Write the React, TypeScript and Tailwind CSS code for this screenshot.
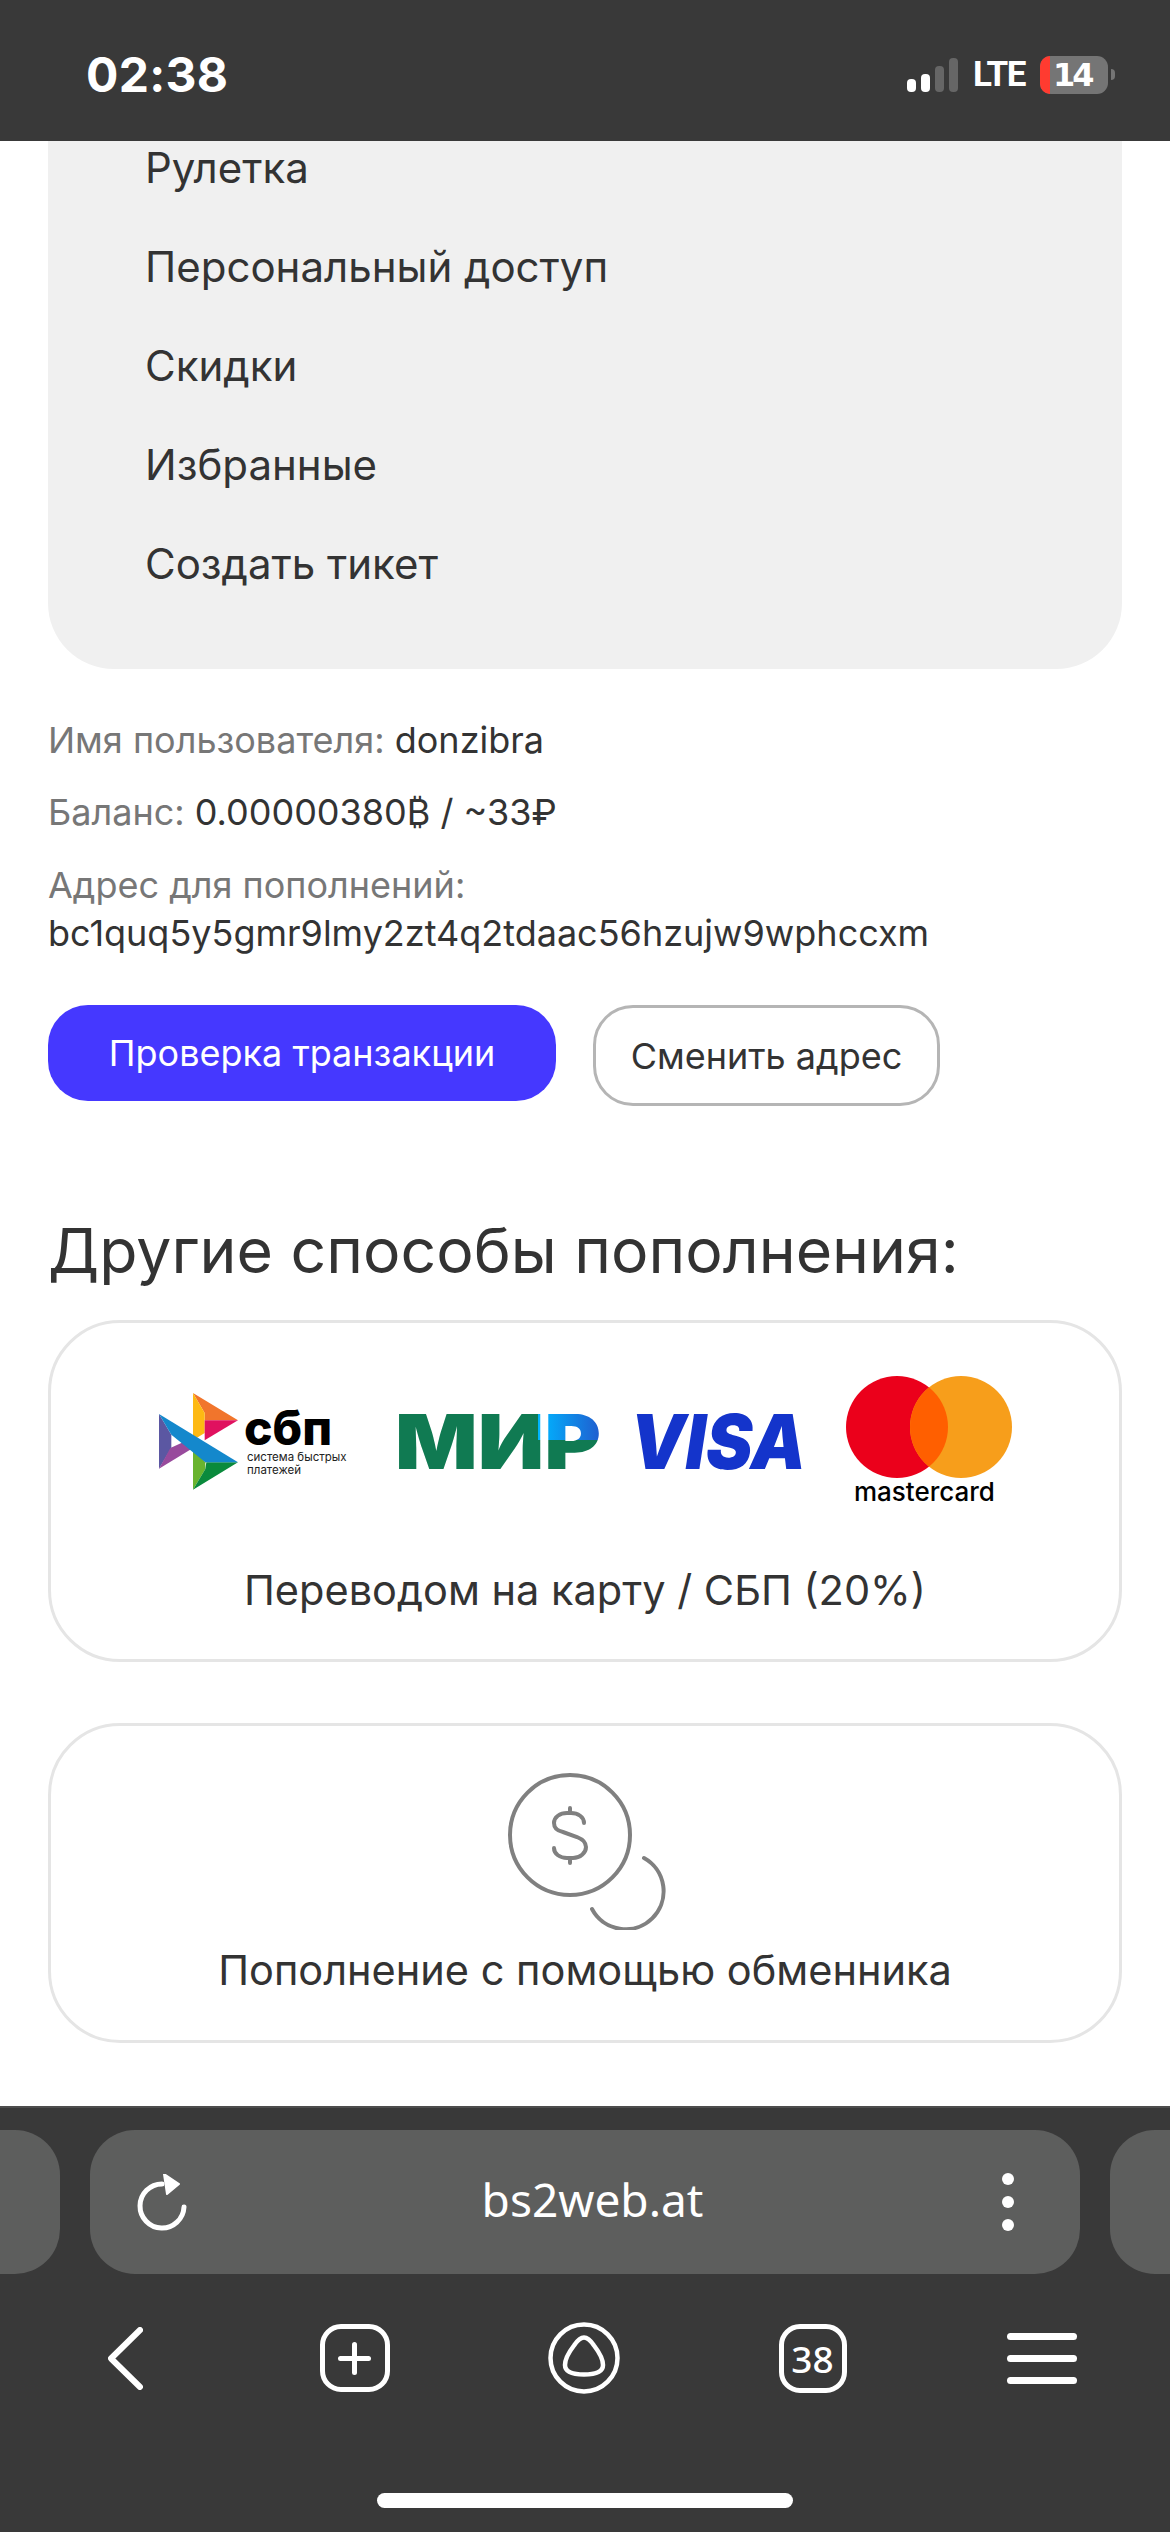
const menuItems = ['Рулетка', 'Персональный доступ', 'Скидки', 'Избранные', 'Создать тикет'];

function SbpLogo() {
  return (
    <svg width="191" height="97" viewBox="0 0 191 97" className="shrink-0 overflow-visible">
      <g transform="translate(-19.33 -23.33) scale(0.3333)">
        <polygon points="160,70 295,152 195,152 195,130" fill="#f1752c" />
        <polygon points="160,70 195,130 195,190 160,212" fill="#fdb913" />
        <polygon points="195,152 295,152 195,212" fill="#e0115f" />
        <polygon points="58,133 95,195 95,235 58,297" fill="#5b57a2" />
        <polygon points="58,297 92,235 130,218 160,235" fill="#984a9c" />
        <polygon points="160,235 197,278 197,298 160,360" fill="#69b42e" />
        <polygon points="160,360 197,298 200,278 295,278" fill="#0a8a3c" />
        <polygon points="58,133 295,278 197,278 95,195" fill="#1488cc" />
      </g>
      <text x="85" y="52" fontFamily="Inter, sans-serif" fontSize="48" fontWeight="800" fill="#000">сбп</text>
      <text x="88" y="68" fontFamily="Inter, sans-serif" fontSize="11.5" fill="#222">система быстрых</text>
      <text x="88" y="81" fontFamily="Inter, sans-serif" fontSize="11.5" fill="#222">платежей</text>
    </svg>
  );
}

function MirLogo() {
  return (
    <svg width="201" height="55" viewBox="0 0 201 55" className="ml-[48px] shrink-0 overflow-visible">
      <defs>
        <linearGradient id="mirBlue" gradientUnits="userSpaceOnUse" x1="142" y1="0" x2="201" y2="0">
          <stop offset="0" stopColor="#00b4ff" />
          <stop offset="1" stopColor="#1f5fd0" />
        </linearGradient>
        <pattern id="mirFill" patternUnits="userSpaceOnUse" width="210" height="55">
          <rect width="210" height="55" fill="#107a52" />
          <rect x="140" width="70" height="26" fill="url(#mirBlue)" />
        </pattern>
      </defs>
      <text x="-3" y="55" fontFamily="Inter, sans-serif" fontSize="76" fontWeight="900" fill="url(#mirFill)" textLength="206" lengthAdjust="spacingAndGlyphs">МИР</text>
    </svg>
  );
}

function VisaLogo() {
  return (
    <svg width="167" height="55" viewBox="0 0 167 55" className="ml-[34px] shrink-0 overflow-visible">
      <text x="-3" y="55" fontFamily="Inter, sans-serif" fontSize="76" fontWeight="900" fontStyle="italic" fill="#1434cb" textLength="176" lengthAdjust="spacingAndGlyphs">VISA</text>
    </svg>
  );
}

function MastercardLogo() {
  return (
    <svg width="166" height="130" viewBox="0 0 166 130" className="ml-[46px] shrink-0 overflow-visible">
      <defs>
        <clipPath id="mcLeft">
          <circle cx="51" cy="51" r="51" />
        </clipPath>
      </defs>
      <circle cx="51" cy="51" r="51" fill="#eb001b" />
      <circle cx="115" cy="51" r="51" fill="#f79e1b" />
      <circle cx="115" cy="51" r="51" fill="#ff5f00" clipPath="url(#mcLeft)" />
      <text x="8" y="125" fontFamily="Inter, sans-serif" fontSize="26" fontWeight="500" fill="#000">mastercard</text>
    </svg>
  );
}

function ExchangeIcon() {
  return (
    <svg width="190" height="170" viewBox="0 0 190 170" fill="none" stroke="#808080" strokeLinecap="round" strokeWidth="4" className="ml-[20px] shrink-0">
      <circle cx="70" cy="75" r="60" />
      <path d="M144 98 A38 38 0 1 1 92 149" />
      <path d="M84 63 C84 57 78 53 71 53 L67 53 C60 53 54 57 54 63 C54 68 58 71 63 72 L77 77 C82 79 86 82 86 87 C86 93 80 98 73 98 L67 98 C60 98 54 94 54 88" />
      <path d="M70 48 V53 M70 98 V103" />
    </svg>
  );
}

function ReloadIcon() {
  return (
    <svg width="50" height="57" viewBox="0 0 50 57" fill="none">
      <path d="M25 10 A22 22 0 1 0 47 33" stroke="#fff" strokeWidth="5" strokeLinecap="round" />
      <polygon points="27,0 42,10 30,20" fill="#fff" stroke="#fff" strokeWidth="2" strokeLinejoin="round" />
    </svg>
  );
}

function AliceIcon() {
  return (
    <svg width="72" height="72" viewBox="0 0 72 72" fill="none" stroke="#fff" strokeWidth="4.5">
      <circle cx="36" cy="36" r="33.5" />
      <path d="M36 15.5 C40 15.5 43 19 46 23.5 C51 30 55 37 55 43 C55 50 47 52.5 36 52.5 C25 52.5 17 50 17 43 C17 37 21 30 26 23.5 C29 19 32 15.5 36 15.5 Z" />
    </svg>
  );
}

export default function App() {
  return (
    <div className="w-[1170px] h-[2532px] flex flex-col overflow-hidden bg-white text-[#333] font-['Inter',sans-serif]">
      {/* Status bar */}
      <div className="h-[141px] shrink-0 bg-[#393939] flex items-center justify-between pt-2 pl-[86px] pr-[55px] text-white relative z-10">
        <span className="text-[48px] font-bold leading-none tracking-[0.3px]">02:38</span>
        <div className="flex items-center">
          <div className="flex items-end gap-[5px] h-[34px]">
            <div className="w-[9px] h-[13px] rounded-[4px] bg-white" />
            <div className="w-[9px] h-[18px] rounded-[4px] bg-white" />
            <div className="w-[9px] h-[26px] rounded-[4px] bg-[#666]" />
            <div className="w-[9px] h-[34px] rounded-[4px] bg-[#666]" />
          </div>
          <span className="ml-[15px] w-[55px] font-['Roboto',sans-serif] text-[35px] font-bold leading-none tracking-[-1.5px]">LTE</span>
          <div className="ml-[12px] w-[68px] h-[38px] rounded-[11px] bg-[#757575] flex items-center">
            <div className="w-[10px] h-full rounded-l-[11px] bg-[#ff3b30]" />
            <span className="ml-[3px] font-['DejaVu_Sans',sans-serif] text-[32px] font-bold leading-none tracking-[-3px]">14</span>
          </div>
          <div className="ml-[3px] w-[4px] h-[11px] rounded-r-full bg-[#757575]" />
        </div>
      </div>

      {/* Page */}
      <div className="flex-1 overflow-hidden px-[48px]">
        <div className="rounded-b-[66px] bg-[#f0f0f0] pl-[97px] pb-[56px] text-[42px]">
          <div className="-mt-[23px]">
            {menuItems.map((item) => (
              <div key={item} className="h-[99px] flex items-center">{item}</div>
            ))}
          </div>
        </div>

        <div className="mt-[47px] text-[36px] leading-[48px]">
          <p><span className="text-[#777]">Имя пользователя: </span>donzibra</p>
          <p className="mt-[24px]"><span className="text-[#777]">Баланс: </span>0.00000380₿ / ~33₽</p>
          <p className="mt-[25px] text-[#777]">Адрес для пополнений:</p>
          <p>bc1quq5y5gmr9lmy2zt4q2tdaac56hzujw9wphccxm</p>
        </div>

        <div className="mt-[48px] flex items-start text-[36px]">
          <button className="w-[508px] h-[96px] rounded-[40px] bg-[#4538ff] text-white">Проверка транзакции</button>
          <button className="ml-[37px] w-[347px] h-[101px] rounded-[40px] border-[3px] border-[#b5b5b5] bg-white">Сменить адрес</button>
        </div>

        <h2 className="mt-[106px] text-[62.5px] leading-[76px] font-normal">Другие способы пополнения:</h2>

        <div className="mt-[32px] h-[342px] rounded-[72px] border-[3px] border-[#e5e5e5] flex flex-col items-center pt-[54px] text-[41.5px]">
          <div className="flex items-center h-[128px]">
            <SbpLogo />
            <MirLogo />
            <VisaLogo />
            <MastercardLogo />
          </div>
          <p className="mt-[61px] leading-[48px]">Переводом на карту / СБП (20%)</p>
        </div>

        <div className="mt-[61px] h-[320px] rounded-[72px] border-[3px] border-[#e5e5e5] flex flex-col items-center pt-[34px] text-[41.5px]">
          <ExchangeIcon />
          <p className="mt-[16px] leading-[48px]">Пополнение с помощью обменника</p>
        </div>
      </div>

      {/* Browser bar */}
      <div className="h-[426px] shrink-0 bg-[#393939] border-t-2 border-[#4d4d4d] pt-[22px] text-white">
        <div className="flex gap-[30px] h-[144px]">
          <div className="w-[60px] shrink-0 rounded-r-[45px] bg-[#5d5e5d]" />
          <div className="w-[990px] shrink-0 rounded-[45px] bg-[#5d5e5d] flex items-center justify-between pl-[47px] pr-[66px]">
            <ReloadIcon />
            <span className="font-['Noto_Sans',sans-serif] text-[46px] mr-[4px] pb-[6px]">bs2web.at</span>
            <div className="flex flex-col gap-[11px]">
              <div className="w-[12px] h-[12px] rounded-full bg-white" />
              <div className="w-[12px] h-[12px] rounded-full bg-white" />
              <div className="w-[12px] h-[12px] rounded-full bg-white" />
            </div>
          </div>
          <div className="flex-1 rounded-l-[45px] bg-[#5d5e5d]" />
        </div>

        <div className="mt-[40px] ml-[11px] h-[88px] grid grid-cols-[repeat(5,229px)] items-center justify-items-center">
          <svg width="35" height="63" viewBox="0 0 35 63" fill="none" stroke="#fff" strokeWidth="6" strokeLinecap="round" strokeLinejoin="round">
            <polyline points="32,3 3,31.5 32,60" />
          </svg>
          <div className="w-[70px] h-[68px] rounded-[21px] border-[5px] border-white flex items-center justify-center relative">
            <div className="absolute w-[33px] h-[5px] rounded-full bg-white" />
            <div className="absolute w-[5px] h-[33px] rounded-full bg-white" />
          </div>
          <AliceIcon />
          <div className="w-[68px] h-[69px] rounded-[21px] border-[5px] border-white flex items-center justify-center font-['Noto_Sans',sans-serif] text-[37px] font-medium leading-none">38</div>
          <div className="flex flex-col gap-[15px]">
            <div className="w-[70px] h-[7px] rounded-full bg-white" />
            <div className="w-[70px] h-[7px] rounded-full bg-white" />
            <div className="w-[70px] h-[7px] rounded-full bg-white" />
          </div>
        </div>

        <div className="mt-[91px] mx-auto w-[416px] h-[15px] rounded-full bg-white" />
      </div>
    </div>
  );
}
